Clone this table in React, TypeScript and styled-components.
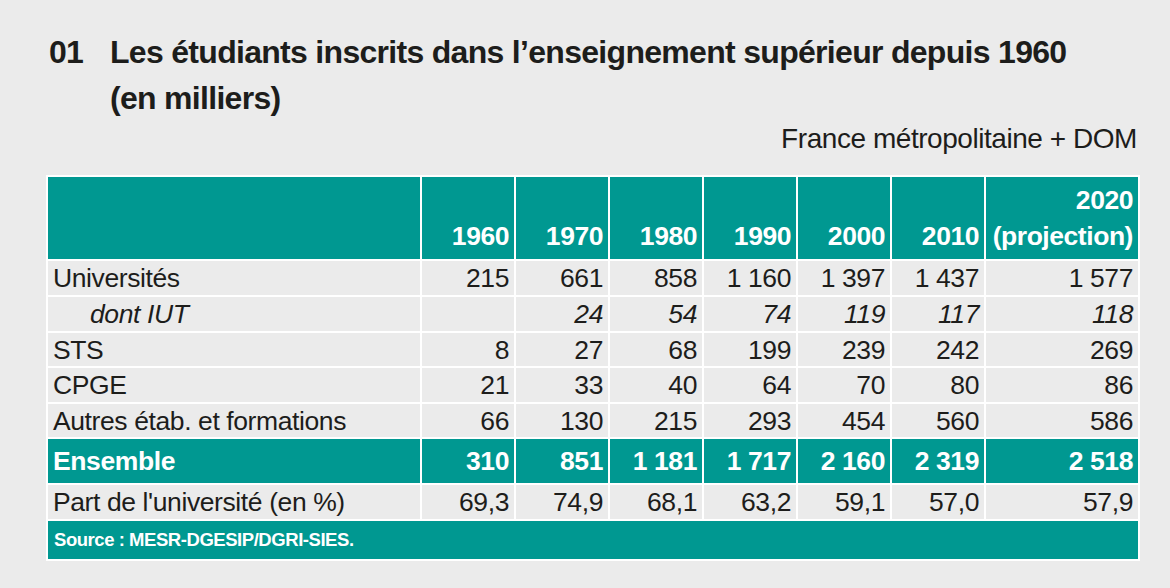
import React from "react";
import styled, { createGlobalStyle } from "styled-components";

const Global = createGlobalStyle`
  html, body { margin: 0; padding: 0; }
  body {
    background: #ebebeb;
    font-family: "Liberation Sans", Arial, Helvetica, sans-serif;
    color: #1d1d1b;
  }
`;

const TEAL = "#009891";

const Page = styled.div`
  width: 1170px;
  height: 588px;
  box-sizing: border-box;
  padding: 29px 30px 0 46px;
`;

const Title = styled.h1`
  margin: 0;
  display: grid;
  grid-template-columns: 61px 1fr;
  padding-left: 3px;
  font-size: 32px;
  line-height: 46px;
  font-weight: 700;
  color: #1d1d1b;
  letter-spacing: -0.7px;
`;

const Num = styled.span``;

const TitleText = styled.span`
  display: block;
  max-width: 980px;
`;

const Scope = styled.div`
  text-align: right;
  font-size: 28px;
  line-height: 34px;
  letter-spacing: -0.45px;
  margin-top: 1px;
  padding-right: 2px;
  margin-bottom: 19px;
  width: 1091px;
`;

const Table = styled.table`
  border-collapse: separate;
  border-spacing: 2px;
  background: #fff;
  table-layout: fixed;
  width: 1094px;
  font-size: 26.5px;
  letter-spacing: -0.4px;
`;

const HeadCell = styled.th`
  background: ${TEAL};
  color: #fff;
  font-weight: 700;
  text-align: right;
  vertical-align: bottom;
  height: 82px;
  padding: 0 5px 5px 5px;
  line-height: 36px;
  letter-spacing: -0.45px;
  box-sizing: border-box;
`;

const Row = styled.tr<{ $h: number }>`
  height: ${(p) => p.$h}px;
`;

const Cell = styled.td<{ $total?: boolean; $label?: boolean; $italic?: boolean }>`
  background: ${(p) => (p.$total ? TEAL : "#ebebeb")};
  color: ${(p) => (p.$total ? "#fff" : "#1d1d1b")};
  font-weight: ${(p) => (p.$total ? 700 : 400)};
  font-style: ${(p) => (p.$italic ? "italic" : "normal")};
  text-align: ${(p) => (p.$label ? "left" : "right")};
  padding: 0 5px 0 ${(p) => (p.$label ? (p.$italic ? "42px" : "5px") : "5px")};
  line-height: 30px;
  white-space: nowrap;
  vertical-align: middle;
`;

const SourceCell = styled.td`
  background: ${TEAL};
  color: #fff;
  font-weight: 700;
  font-size: 18.5px;
  letter-spacing: -0.45px;
  height: 38px;
  padding: 0 6px;
  vertical-align: middle;
`;

type R = { label: string; values: string[]; italic?: boolean; total?: boolean; h: number };

const years = ["1960", "1970", "1980", "1990", "2000", "2010"];

const rows: R[] = [
  { label: "Universités", values: ["215", "661", "858", "1 160", "1 397", "1 437", "1 577"], h: 34 },
  { label: "dont IUT", values: ["", "24", "54", "74", "119", "117", "118"], italic: true, h: 34 },
  { label: "STS", values: ["8", "27", "68", "199", "239", "242", "269"], h: 33 },
  { label: "CPGE", values: ["21", "33", "40", "64", "70", "80", "86"], h: 34 },
  { label: "Autres étab. et formations", values: ["66", "130", "215", "293", "454", "560", "586"], h: 33 },
  { label: "Ensemble", values: ["310", "851", "1 181", "1 717", "2 160", "2 319", "2 518"], total: true, h: 44 },
  { label: "Part de l'université (en %)", values: ["69,3", "74,9", "68,1", "63,2", "59,1", "57,0", "57,9"], h: 34 },
];

export default function App() {
  return (
    <>
      <Global />
      <Page>
        <Title>
          <Num>01</Num>
          <TitleText>Les étudiants inscrits dans l’enseignement supérieur depuis 1960 (en milliers)</TitleText>
        </Title>
        <Scope>France métropolitaine + DOM</Scope>
        <Table>
          <colgroup>
            <col style={{ width: 372 }} />
            {years.map((y) => (
              <col key={y} style={{ width: 92 }} />
            ))}
            <col style={{ width: 152 }} />
          </colgroup>
          <thead>
            <tr>
              <HeadCell />
              {years.map((y) => (
                <HeadCell key={y}>{y}</HeadCell>
              ))}
              <HeadCell>
                2020
                <br />
                (projection)
              </HeadCell>
            </tr>
          </thead>
          <tbody>
            {rows.map((r) => (
              <Row key={r.label} $h={r.h}>
                <Cell $label $italic={r.italic} $total={r.total}>
                  {r.label}
                </Cell>
                {r.values.map((v, i) => (
                  <Cell key={i} $italic={r.italic} $total={r.total}>
                    {v}
                  </Cell>
                ))}
              </Row>
            ))}
            <tr>
              <SourceCell colSpan={8}>Source : MESR-DGESIP/DGRI-SIES.</SourceCell>
            </tr>
          </tbody>
        </Table>
      </Page>
    </>
  );
}
